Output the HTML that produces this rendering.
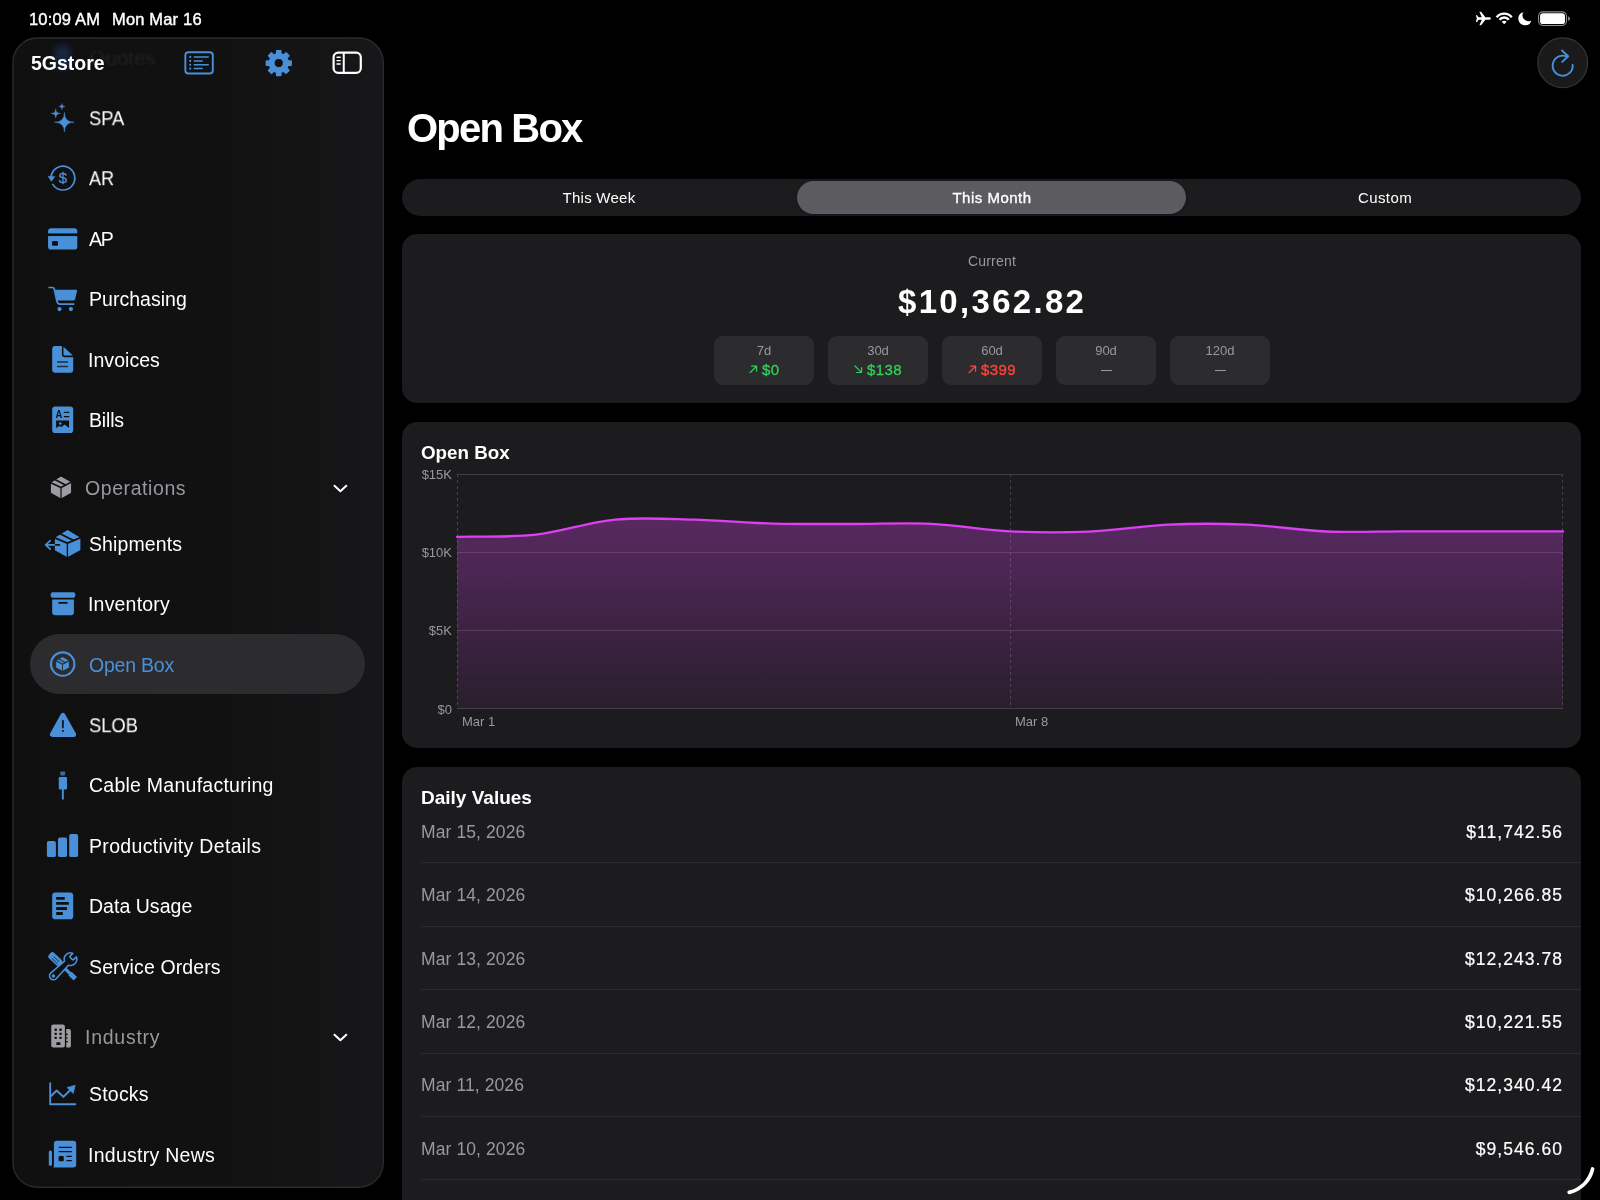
<!DOCTYPE html>
<html>
<head>
<meta charset="utf-8">
<title>Open Box</title>
<style>
*{box-sizing:border-box;margin:0;padding:0}
html,body{width:1600px;height:1200px;overflow:hidden;background:#000}
body{font-family:"Liberation Sans",sans-serif;color:#fff;position:relative}
.t{position:absolute;line-height:1;white-space:nowrap;transform:translateY(-50%);will-change:transform}
.c{transform:translate(-50%,-50%)}
.r{transform:translate(-100%,-50%)}
.abs{position:absolute}
/* status bar */
.sb{font-size:16.5px;color:#fff;-webkit-text-stroke:0.4px #fff;letter-spacing:0.17px}
/* sidebar */
#side{position:absolute;left:13px;top:38px;width:371px;height:1150px;border-radius:31px;background:#111112;border:1.5px solid #262628}
.nav{font-size:19.5px;color:#fff;left:88px}
.sec{font-size:19.5px;color:#98989f;left:85px}
.ic{position:absolute;overflow:visible}
#sel{position:absolute;left:30px;top:634px;width:335px;height:60px;border-radius:30px;background:#2c2c2e}
/* main */
.card{position:absolute;left:402px;width:1179px;background:#1c1c1e;border-radius:15px}
.pill{position:absolute;top:336px;width:100px;height:49px;border-radius:9px;background:#2c2c2e}
.pl{font-size:13px;color:#98989f}
.pv{font-size:15px;letter-spacing:0.4px;-webkit-text-stroke:0.3px currentColor}
.dv{font-size:17.5px;color:#98989f;left:421px;letter-spacing:0.1px}
.da{font-size:17.5px;color:#fff;left:1563px;letter-spacing:1.05px;-webkit-text-stroke:0.2px #fff}
.ax{font-size:13px;color:#98989f}
.hr{position:absolute;left:421px;width:1160px;height:1px;background:#2c2c2e}
</style>
</head>
<body>
<!-- STATUS BAR -->
<div class="t sb" style="left:29px;top:19px">10:09 AM</div>
<div class="t sb" style="left:112px;top:19px">Mon Mar 16</div>

<!-- SIDEBAR -->
<svg class="abs" style="left:0;top:0" width="400" height="1200" viewBox="0 0 400 1200"><defs><linearGradient id="sg" x1="13" y1="0" x2="383" y2="0" gradientUnits="userSpaceOnUse"><stop offset="0" stop-color="#101011"/><stop offset="0.55" stop-color="#111112"/><stop offset="1" stop-color="#171719"/></linearGradient></defs><rect x="13" y="38" width="370.3" height="1149.2" rx="24.5" fill="url(#sg)" stroke="#2b2b2d" stroke-width="1.35"/></svg>
<div id="sel"></div>
<!-- ICONS -->
<!--ICONS-->
<svg class="abs" style="left:0;top:0" width="1600" height="1200" viewBox="0 0 1600 1200">
<defs><filter id="bl" x="-50%" y="-50%" width="200%" height="200%"><feGaussianBlur stdDeviation="3"/></filter><filter id="bl2" x="-20%" y="-50%" width="140%" height="200%"><feGaussianBlur stdDeviation="0.9"/></filter></defs>
<rect x="54.5" y="45.5" width="16" height="24" rx="5" fill="#13273d" filter="url(#bl)"/><text x="89.5" y="65" font-family="Liberation Sans" font-size="20.5" fill="#212123" filter="url(#bl2)">Quotes</text>
<g stroke="#4a90d9" fill="none"><rect x="185.35" y="52.2" width="27.45" height="21.3" rx="3" stroke-width="1.9"/>
<path d="M193.75 56.9H208.75M193.75 60.9H202.75M193.75 64.75H208.75M193.75 68.6H202.75" stroke-width="1.5"/></g>
<circle cx="190.25" cy="56.9" r="1.05" fill="#4a90d9"/>
<circle cx="190.25" cy="60.9" r="1.05" fill="#4a90d9"/>
<circle cx="190.25" cy="64.75" r="1.05" fill="#4a90d9"/>
<circle cx="190.25" cy="68.6" r="1.05" fill="#4a90d9"/>
<path d="M276.53 53.86L276.67 50.67L280.83 50.67L280.97 53.86L283.71 55.00L286.07 52.84L289.01 55.78L286.85 58.14L287.99 60.88L291.18 61.02L291.18 65.18L287.99 65.32L286.85 68.06L289.01 70.42L286.07 73.36L283.71 71.20L280.97 72.34L280.83 75.53L276.67 75.53L276.53 72.34L273.79 71.20L271.43 73.36L268.49 70.42L270.65 68.06L269.51 65.32L266.32 65.18L266.32 61.02L269.51 60.88L270.65 58.14L268.49 55.78L271.43 52.84L273.79 55.00Z" fill="#4a90d9" stroke="#4a90d9" stroke-width="1.4" stroke-linejoin="round"/><circle cx="278.75" cy="63.1" r="4.1" fill="#111112"/>
<g stroke="#fff" fill="none"><rect x="333.6" y="52.6" width="27.2" height="20.3" rx="4.6" stroke-width="2.2"/><path d="M343.75 52.6V72.9" stroke-width="2"/><path d="M337 57.25H340.2M337 60.6H340.2M337 64H340.2" stroke-width="1.4" stroke-linecap="round"/></g>
<path d="M64.4 112.45Q64.4 122.2 74.25 122.2Q64.4 122.2 64.4 131.95Q64.4 122.2 54.550000000000004 122.2Q64.4 122.2 64.4 112.45ZM55.75 108.95Q55.75 113.45 60.45 113.45Q55.75 113.45 55.75 117.95Q55.75 113.45 51.05 113.45Q55.75 113.45 55.75 108.95ZM61.9 103.55Q61.9 106.55 64.9 106.55Q61.9 106.55 61.9 109.55Q61.9 106.55 58.9 106.55Q61.9 106.55 61.9 103.55Z" fill="#4a90d9" stroke="#4a90d9" stroke-width="0.5" stroke-linejoin="round"/>
<path d="M51.1 176.6A11.9 11.9 0 1 1 52.8 184.4" fill="none" stroke="#4a90d9" stroke-width="1.7" stroke-linecap="round"/>
<path d="M47.9 176.3L55.1 176.5L51.4 181.4Z" fill="#4a90d9" stroke="#4a90d9" stroke-width="0.3" stroke-linejoin="round"/>
<text x="62.9" y="183.0" text-anchor="middle" font-family="Liberation Sans" font-size="15" fill="#4a90d9" stroke="#4a90d9" stroke-width="0.3">$</text>
<rect x="48.06" y="228.2" width="29.24" height="21.4" rx="3.2" fill="#4a90d9"/><rect x="47" y="233.4" width="31.5" height="2.66" fill="#111112"/><rect x="52" y="240.9" width="6" height="4.9" rx="1.3" fill="#111112"/>
<path d="M49.1 287.5H52.6Q53.9 287.5 54.2 288.8L56.9 301.2Q57.4 304.1 60 304.1H73.7" fill="none" stroke="#4a90d9" stroke-width="1.7" stroke-linecap="round" stroke-linejoin="round"/>
<path d="M55 289.75H76.3Q77.3 289.75 77.1 290.8L75.1 299.3Q74.8 300.4 73.7 300.4H57.2Z" fill="#4a90d9"/>
<circle cx="59.5" cy="309.06" r="2.1" fill="#4a90d9"/><circle cx="70.9" cy="309.06" r="2.1" fill="#4a90d9"/>
<path d="M55.2 346H61.9V354.8Q61.9 357.2 64.3 357.2H73.2V369.8a3 3 0 0 1 -3 3H55.2a3 3 0 0 1 -3 -3V349a3 3 0 0 1 3 -3Z" fill="#4a90d9"/>
<path d="M63.5 346.7L72.9 355.5H64.3Q63.5 355.5 63.5 354.7Z" fill="#4a90d9"/>
<path d="M57.6 362H67.6M57.6 366.5H67.6" stroke="#1b2e45" stroke-width="1.3" stroke-linecap="round"/>
<rect x="52.2" y="406.4" width="21" height="26.6" rx="3.1" fill="#4a90d9"/>
<text transform="translate(58.9,417.75) scale(1,1.17)" text-anchor="middle" font-family="Liberation Sans" font-size="9.4" font-weight="bold" fill="#111112">A</text>
<path d="M64.3 412.4H68.8M64.3 416.6H68.8" stroke="#111112" stroke-width="1.3" stroke-linecap="round"/>
<path d="M56.1 420.5H69V428L64.6 424.6L61.6 426.9L59.5 426.1L56.1 428Z" fill="#111112"/><circle cx="60.25" cy="423.6" r="1.25" fill="#4a90d9"/>
<polygon points="61.00,477.41 70.35,482.64 70.35,492.36 61.00,497.59 51.65,492.36 51.65,483.15" fill="#9c9ca2" stroke="#9c9ca2" stroke-width="1.5" stroke-linejoin="round"/><path d="M61.00 487.50L50.20 482.47M61.00 487.50L71.77 481.90" stroke="#111112" stroke-width="1.62" fill="none"/><path d="M61.00 487.50L61.00 499.19" stroke="#111112" stroke-width="1.25" fill="none"/><path d="M54.90 479.55L65.85 485.16" stroke="#111112" stroke-width="1.62" fill="none"/>
<path d="M334.5 485.7L340.4 491.2L346.3 485.7" fill="none" stroke="#fff" stroke-width="2" stroke-linecap="round" stroke-linejoin="round"/>
<path d="M334.5 1034.7L340.4 1040.2L346.3 1034.7" fill="none" stroke="#fff" stroke-width="2" stroke-linecap="round" stroke-linejoin="round"/>
<polygon points="67.59,530.77 79.64,538.02 79.64,549.50 67.40,556.37 55.64,549.83 55.64,538.21" fill="#4a90d9" stroke="#4a90d9" stroke-width="1.5" stroke-linejoin="round"/><path d="M67.40 543.10L54.16 537.59M67.40 543.10L81.11 537.40" stroke="#111112" stroke-width="1.76" fill="none"/><path d="M67.40 543.10L67.40 557.97" stroke="#111112" stroke-width="1.35" fill="none"/><path d="M60.19 533.76L73.70 540.65" stroke="#111112" stroke-width="1.76" fill="none"/>
<path d="M45.8 544.8H55.3M50.2 540.6L45.7 544.8L50.2 549.1" fill="none" stroke="#4a90d9" stroke-width="1.7" stroke-linecap="round" stroke-linejoin="round"/><path d="M55.6 544.8H59.4" stroke="#111112" stroke-width="1.7" stroke-linecap="round"/>
<rect x="50.7" y="592.3" width="24.55" height="5.45" rx="2" fill="#4a90d9"/><path d="M52.2 599.4H73.9V612.2a3 3 0 0 1 -3 3H55.2a3 3 0 0 1 -3 -3Z" fill="#4a90d9"/><path d="M59.1 602.8H67" stroke="#111112" stroke-width="1.7" stroke-linecap="round"/>
<circle cx="62.7" cy="664.1" r="11.7" fill="none" stroke="#4a90d9" stroke-width="2.1"/>
<polygon points="62.50,658.03 68.14,661.11 68.14,667.11 62.50,670.20 56.94,667.11 56.94,661.11" fill="#4a90d9" stroke="#4a90d9" stroke-width="1.5" stroke-linejoin="round"/><path d="M62.50 664.20L55.55 660.34M62.50 664.20L69.55 660.35" stroke="#2c2c2e" stroke-width="1.23" fill="none"/><path d="M62.50 664.20L62.50 671.80" stroke="#2c2c2e" stroke-width="0.95" fill="none"/><path d="M58.32 658.80L65.50 662.75" stroke="#2c2c2e" stroke-width="1.23" fill="none"/>
<polygon points="62.9,715.4 52.4,734.4 73.6,734.4" fill="#4a90d9" stroke="#4a90d9" stroke-width="5" stroke-linejoin="round"/><path d="M62.9 720.7V727.5" stroke="#111112" stroke-width="1.7" stroke-linecap="round"/><circle cx="62.9" cy="731" r="1.05" fill="#111112"/>
<rect x="60.25" y="771.4" width="4.85" height="4" rx="0.8" fill="#4a90d9" opacity="0.72"/><rect x="58.75" y="777" width="8.25" height="12.6" rx="1.3" fill="#4a90d9"/><path d="M62.85 789V798.7" stroke="#4a90d9" stroke-width="1.9" stroke-linecap="round"/>
<rect x="46.9" y="841" width="9" height="16.1" rx="1.9" fill="#4a90d9"/><rect x="58" y="837.4" width="9" height="19.7" rx="1.9" fill="#4a90d9"/><rect x="69.2" y="833.9" width="8.9" height="23.2" rx="1.9" fill="#4a90d9"/>
<rect x="52.2" y="892.4" width="21" height="26.85" rx="3.1" fill="#4a90d9"/>
<rect x="56.1" y="896.9" width="8.65" height="2.85" rx="0.4" fill="#111112"/>
<rect x="56.1" y="902" width="12.80" height="2.85" rx="0.4" fill="#111112"/>
<rect x="56.1" y="907.06" width="10.90" height="2.85" rx="0.4" fill="#111112"/>
<rect x="56.1" y="912.1" width="6.80" height="2.85" rx="0.4" fill="#111112"/>
<rect x="-7.6" y="-3.7" width="15.2" height="7.4" rx="2.3" transform="translate(55.3,959.1) rotate(43.5)" fill="#4a90d9"/>
<path d="M52.1 958.5L57.2 963.5M53.9 956.7L58.8 961.5" stroke="#111112" stroke-width="0.8" stroke-linecap="round"/>
<path d="M61 965L71 974.4" stroke="#4a90d9" stroke-width="3.2"/><path d="M70 973.5L75.3 978.7" stroke="#4a90d9" stroke-width="4.8"/>
<path d="M72.86 953.36L70.3 955.9Q69.5 956.7 70.3 957.5L72.2 959.4Q73 960.2 73.8 959.4L76.34 956.84A6.3 6.3 0 0 1 68.42 965.15L56.13 978.69A3.9 3.9 0 1 1 50.67 973.11L64.51 961.14A6.3 6.3 0 0 1 72.86 953.36Z" fill="#111112" stroke="#4a90d9" stroke-width="1.55" stroke-linejoin="round"/>
<circle cx="53.4" cy="975.9" r="1.75" fill="#4a90d9"/>
<rect x="51.25" y="1024.5" width="13.65" height="23.1" rx="2" fill="#9c9ca2"/><path d="M66.25 1029H68.9a2 2 0 0 1 2 2V1046a1.6 1.6 0 0 1 -1.6 1.6H66.25Z" fill="#9c9ca2"/>
<rect x="54.550000000000004" y="1028.6" width="2.3" height="2.3" rx="0.6" fill="#111112"/>
<rect x="54.550000000000004" y="1032.6499999999999" width="2.3" height="2.3" rx="0.6" fill="#111112"/>
<rect x="54.550000000000004" y="1036.6499999999999" width="2.3" height="2.3" rx="0.6" fill="#111112"/>
<rect x="59.4" y="1028.6" width="2.3" height="2.3" rx="0.6" fill="#111112"/>
<rect x="59.4" y="1032.6499999999999" width="2.3" height="2.3" rx="0.6" fill="#111112"/>
<rect x="59.4" y="1036.6499999999999" width="2.3" height="2.3" rx="0.6" fill="#111112"/>
<rect x="56.3" y="1042.3" width="4.1" height="2.8" rx="0.5" fill="#111112"/><path d="M65.6 1034.4H67.9M65.6 1038H67.9M65.6 1041.6H67.9" stroke="#111112" stroke-width="1.1"/>
<path d="M50.2 1083.1V1104.2H75.3" fill="none" stroke="#4a90d9" stroke-width="1.9" stroke-linecap="round" stroke-linejoin="round"/><path d="M51.1 1096L56.7 1090.5L63.4 1096.9L70.6 1089.8" fill="none" stroke="#4a90d9" stroke-width="1.9" stroke-linecap="round" stroke-linejoin="round"/><path d="M66.9 1087.4L75.3 1085.2L73.3 1093.6Z" fill="#4a90d9" stroke="#4a90d9" stroke-width="0.5" stroke-linejoin="round"/>
<path d="M56.9 1140.8H73.2a3 3 0 0 1 3 3V1164.4a3 3 0 0 1 -3 3H53.2L53.9 1166.3V1143.8a3 3 0 0 1 3 -3Z" fill="#4a90d9"/><path d="M50.4 1152.2V1164.3" stroke="#4a90d9" stroke-width="3.2" stroke-linecap="round"/>
<path d="M59.3 1147.45H71.4M59.3 1151.7H71.4M66.9 1156.4H71.4M66.9 1160.7H71.4" stroke="#111112" stroke-width="1.3" stroke-linecap="round"/><rect x="58.6" y="1156" width="5.2" height="5.25" rx="1" fill="#111112"/>
<path transform="translate(1483.4,18.5)" d="M7.5 0C7.5 -0.8 6.4 -1.25 5.4 -1.25L2 -1.25L-2.3 -6.75L-4 -6.75L-1.6 -1.25L-4.9 -1.2L-6.3 -3.2L-7.5 -3.2L-6.6 0L-7.5 3.4L-6.3 3.4L-4.9 1.25L-1.6 1.25L-4 6.75L-2.3 6.75L2 1.25L5.4 1.25C6.4 1.25 7.5 0.8 7.5 0Z" fill="#fff"/>
<path d="M1496.62 17.24A9.9 9.9 0 0 1 1511.78 17.24M1499.53 19.68A6.1 6.1 0 0 1 1508.87 19.68" fill="none" stroke="#fff" stroke-width="2.3" stroke-linecap="butt"/>
<path d="M1504.2 24.200000000000003L1501.75 21.79A3.3 3.3 0 0 1 1506.65 21.79Z" fill="#fff"/>
<path d="M1523.4 12.2A6.6 6.6 0 1 0 1531.3 20.4A5.9 5.9 0 0 1 1523.4 12.2Z" fill="#fff"/>
<rect x="1538.6" y="11.9" width="27.9" height="13.6" rx="4.4" fill="none" stroke="#8e8e93" stroke-width="1.1"/><rect x="1540.1" y="13.35" width="24.9" height="10.7" rx="2.9" fill="#fff"/><path d="M1568.1 16.3Q1570.1 17.2 1570.1 18.7Q1570.1 20.2 1568.1 21.1Z" fill="#8e8e93"/>
<circle cx="1562.7" cy="62.7" r="24.9" fill="#1a1a1b" stroke="#353537" stroke-width="1.2"/>
<path d="M1572.66 64.83A10 10 0 1 1 1567.39 56.87" fill="none" stroke="#4a90d9" stroke-width="1.9" stroke-linecap="round"/>
<path d="M1562 50.5L1568.2 56.2L1562.2 61.9" fill="none" stroke="#4a90d9" stroke-width="1.9" stroke-linecap="round" stroke-linejoin="round"/>
</svg>
<!--/ICONS-->
<div class="t" style="left:30.8px;top:64.4px;font-size:19.5px;font-weight:bold">5Gstore</div>

<div class="t nav" style="top:118.5px;left:88.99px;transform-origin:0 50%;transform:translateY(-50%) scaleX(0.939)">SPA</div>
<div class="t nav" style="top:178.5px;left:89.30px;transform-origin:0 50%;transform:translateY(-50%) scaleX(0.927)">AR</div>
<div class="t nav" style="top:239.5px;left:89.30px;letter-spacing:-1.30px">AP</div>
<div class="t nav" style="top:299.5px;left:88.95px;letter-spacing:0.03px">Purchasing</div>
<div class="t nav" style="top:360.5px;left:87.95px;letter-spacing:0.04px">Invoices</div>
<div class="t nav" style="top:420.5px;left:88.95px;letter-spacing:-0.17px">Bills</div>
<div class="t sec" style="top:488.5px;left:84.75px;letter-spacing:0.58px">Operations</div>
<div class="t nav" style="top:544.5px;left:88.95px;letter-spacing:0.10px">Shipments</div>
<div class="t nav" style="top:604.5px;left:87.95px;letter-spacing:0.19px">Inventory</div>
<div class="t nav" style="top:665.5px;color:#4a90d9;left:88.95px;letter-spacing:-0.22px">Open Box</div>
<div class="t nav" style="top:725.5px;left:89.00px;transform-origin:0 50%;transform:translateY(-50%) scaleX(0.941)">SLOB</div>
<div class="t nav" style="top:785.5px;left:88.95px;letter-spacing:0.25px">Cable Manufacturing</div>
<div class="t nav" style="top:846.5px;left:88.95px;letter-spacing:0.32px">Productivity Details</div>
<div class="t nav" style="top:906.5px;left:88.95px;letter-spacing:0.03px">Data Usage</div>
<div class="t nav" style="top:967.5px;left:88.95px;letter-spacing:0.12px">Service Orders</div>
<div class="t sec" style="top:1037.5px;left:84.5px;letter-spacing:0.74px">Industry</div>
<div class="t nav" style="top:1094.5px;left:88.95px;letter-spacing:0.21px">Stocks</div>
<div class="t nav" style="top:1155.5px;left:87.95px;letter-spacing:0.27px">Industry News</div>


<!-- MAIN -->
<div class="t" style="left:406.5px;top:127.6px;font-size:40px;font-weight:bold;letter-spacing:-1.8px">Open Box</div>

<!-- segmented -->
<div class="abs" style="left:402px;top:179px;width:1179px;height:37px;border-radius:18.5px;background:#1c1c1e"></div>
<div class="abs" style="left:797px;top:181px;width:389px;height:33px;border-radius:16.5px;background:#5b5b60;box-shadow:0 1px 3px rgba(0,0,0,.3)"></div>
<div class="t c" style="left:599px;top:197.2px;font-size:15px;letter-spacing:0.25px">This Week</div>
<div class="t c" style="left:992.2px;top:197.2px;font-size:15px;letter-spacing:0.5px;-webkit-text-stroke:0.35px #fff">This Month</div>
<div class="t c" style="left:1385.2px;top:197.2px;font-size:15px;letter-spacing:0.4px">Custom</div>

<!-- card 1 -->
<div class="card" style="top:234px;height:169px"></div>
<div class="t c" style="left:991.5px;top:261px;font-size:14px;color:#98989f;letter-spacing:0.2px">Current</div>
<div class="t c" style="left:991.3px;top:301.4px;font-size:33px;font-weight:bold;letter-spacing:2.3px;padding-left:2.3px">$10,362.82</div>

<div class="pill" style="left:714px"></div>
<div class="pill" style="left:828px"></div>
<div class="pill" style="left:942px"></div>
<div class="pill" style="left:1056px"></div>
<div class="pill" style="left:1170px"></div>
<div class="t c pl" style="left:764px;top:350.2px">7d</div>
<div class="t c pl" style="left:878px;top:350.2px">30d</div>
<div class="t c pl" style="left:992px;top:350.2px">60d</div>
<div class="t c pl" style="left:1106px;top:350.2px">90d</div>
<div class="t c pl" style="left:1220px;top:350.2px">120d</div>
<!--PILLVALS-->
<svg class="abs" style="left:749.3px;top:364.6px" width="8.8" height="8.8" viewBox="0 0 10 10"><path d="M1.2 8.8L8.6 1.4M3 1.4H8.6V7" fill="none" stroke="#30d158" stroke-width="1.4" stroke-linecap="round" stroke-linejoin="round"/></svg><div class="t pv" style="left:762px;top:369px;color:#30d158">$0</div><svg class="abs" style="left:854.3px;top:364.6px" width="8.8" height="8.8" viewBox="0 0 10 10"><path d="M1.2 1.2L8.6 8.6M3 8.6H8.6V3" fill="none" stroke="#30d158" stroke-width="1.4" stroke-linecap="round" stroke-linejoin="round"/></svg><div class="t pv" style="left:867px;top:369px;color:#30d158">$138</div><svg class="abs" style="left:968.3px;top:364.6px" width="8.8" height="8.8" viewBox="0 0 10 10"><path d="M1.2 8.8L8.6 1.4M3 1.4H8.6V7" fill="none" stroke="#ff453a" stroke-width="1.4" stroke-linecap="round" stroke-linejoin="round"/></svg><div class="t pv" style="left:981px;top:369px;color:#ff453a">$399</div><div class="abs" style="left:1100.5px;top:370.2px;width:11px;height:1.2px;background:#98989f"></div><div class="abs" style="left:1214.5px;top:370.2px;width:11px;height:1.2px;background:#98989f"></div>
<!--/PILLVALS-->

<!-- card 2 chart -->
<div class="card" style="top:422px;height:326px"></div>
<div class="t" style="left:421px;top:453px;font-size:18.8px;font-weight:bold">Open Box</div>
<svg class="abs" style="left:0;top:0" width="1600" height="1200" viewBox="0 0 1600 1200">
<defs><linearGradient id="ag" x1="0" y1="518" x2="0" y2="709" gradientUnits="userSpaceOnUse">
<stop offset="0" stop-color="#d946ef" stop-opacity="0.32"/><stop offset="1" stop-color="#d946ef" stop-opacity="0.07"/></linearGradient></defs>
<g stroke="#48484c" stroke-width="1" fill="none">
<path d="M457 474.5H1563M457 552.5H1563M457 630.5H1563M457 708.5H1563" stroke-opacity="0.75"/>
<path d="M457.5 474V709M1010.5 474V709M1562.5 474V709" stroke-dasharray="3 3" stroke-opacity="0.9"/>
</g>
<path d="M457.0 536.8 C470.2 536.4 509.7 537.5 536.0 534.6 C562.3 531.7 588.7 522.1 615.0 519.6 C641.3 517.1 667.7 518.9 694.0 519.6 C720.3 520.3 746.7 522.9 773.0 523.6 C799.3 524.3 825.7 524.0 852.0 524.0 C878.3 524.0 904.7 522.6 931.0 523.8 C957.3 525.0 983.7 530.0 1010.0 531.3 C1036.3 532.6 1062.7 532.7 1089.0 531.6 C1115.3 530.5 1141.7 525.8 1168.0 524.6 C1194.3 523.4 1220.7 523.5 1247.0 524.6 C1273.3 525.8 1299.7 530.4 1326.0 531.5 C1352.3 532.6 1378.7 531.4 1405.0 531.4 C1431.3 531.4 1457.7 531.4 1484.0 531.4 C1510.3 531.4 1549.8 531.4 1563.0 531.4 L1563 708.5 L457 708.5 Z" fill="url(#ag)"/>
<path d="M457.0 536.8 C470.2 536.4 509.7 537.5 536.0 534.6 C562.3 531.7 588.7 522.1 615.0 519.6 C641.3 517.1 667.7 518.9 694.0 519.6 C720.3 520.3 746.7 522.9 773.0 523.6 C799.3 524.3 825.7 524.0 852.0 524.0 C878.3 524.0 904.7 522.6 931.0 523.8 C957.3 525.0 983.7 530.0 1010.0 531.3 C1036.3 532.6 1062.7 532.7 1089.0 531.6 C1115.3 530.5 1141.7 525.8 1168.0 524.6 C1194.3 523.4 1220.7 523.5 1247.0 524.6 C1273.3 525.8 1299.7 530.4 1326.0 531.5 C1352.3 532.6 1378.7 531.4 1405.0 531.4 C1431.3 531.4 1457.7 531.4 1484.0 531.4 C1510.3 531.4 1549.8 531.4 1563.0 531.4" fill="none" stroke="#dc40f2" stroke-width="2.35" stroke-linecap="round" stroke-linejoin="round"/>
</svg>
<div class="t r ax" style="left:452px;top:473.6px">$15K</div>
<div class="t r ax" style="left:452px;top:552px">$10K</div>
<div class="t r ax" style="left:452px;top:630px">$5K</div>
<div class="t r ax" style="left:452px;top:709px">$0</div>
<div class="t ax" style="left:462px;top:721px">Mar 1</div>
<div class="t ax" style="left:1015px;top:721px">Mar 8</div>


<!-- card 3 -->
<div class="card" style="top:767px;height:460px"></div>
<div class="t" style="left:421px;top:797px;font-size:19px;font-weight:bold">Daily Values</div>
<div class="t dv" style="top:832.7px">Mar 15, 2026</div><div class="t r da" style="top:832.7px">$11,742.56</div>
<div class="hr" style="top:862px"></div>
<div class="t dv" style="top:896.1px">Mar 14, 2026</div><div class="t r da" style="top:896.1px">$10,266.85</div>
<div class="hr" style="top:926px"></div>
<div class="t dv" style="top:959.5px">Mar 13, 2026</div><div class="t r da" style="top:959.5px">$12,243.78</div>
<div class="hr" style="top:989px"></div>
<div class="t dv" style="top:1022.9px">Mar 12, 2026</div><div class="t r da" style="top:1022.9px">$10,221.55</div>
<div class="hr" style="top:1053px"></div>
<div class="t dv" style="top:1086.3px">Mar 11, 2026</div><div class="t r da" style="top:1086.3px">$12,340.42</div>
<div class="hr" style="top:1116px"></div>
<div class="t dv" style="top:1149.7px">Mar 10, 2026</div><div class="t r da" style="top:1149.7px">$9,546.60</div>
<div class="hr" style="top:1179px"></div>


<svg class="abs" style="left:1540px;top:1140px" width="60" height="60" viewBox="1540 1140 60 60"><path d="M1569.2 1192.4A31.3 31.3 0 0 0 1592.6 1169" fill="none" stroke="#fff" stroke-width="3.7" stroke-linecap="round"/></svg>
</body>
</html>
